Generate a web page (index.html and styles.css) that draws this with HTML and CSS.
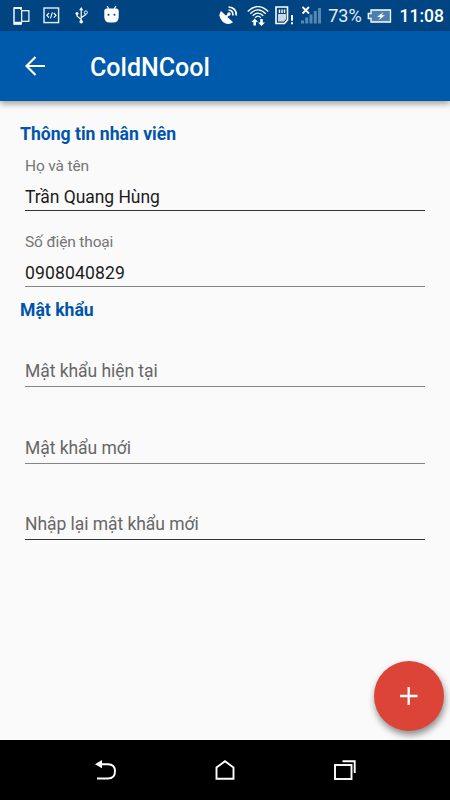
FILE: index.html
```html
<!DOCTYPE html>
<html lang="vi">
<head>
<meta charset="utf-8">
<title>ColdNCool</title>
<link rel="stylesheet" href="styles.css">
</head>
<body>
<div id="screen">
	<div class="statusbar">
		<div class="notifications">
			<svg width="17" height="18" viewBox="0 0 17 18">
				<path d="M8 3V1H1v16h7v-2" fill="none" stroke="#fff" stroke-width="1.4"/>
				<path d="M1 1h8M1 16.5h8M1 15.5h8" stroke="#fff" stroke-width="1.4"/>
				<rect x="8.7" y="3.7" width="7.2" height="10.6" fill="none" stroke="#fff" stroke-width="1.2"/>
			</svg>
			<svg width="17" height="17" viewBox="0 0 17 17">
				<rect x="1" y="1" width="14.6" height="14.6" fill="none" stroke="#e8f0f8" stroke-width="1.4"/>
				<path d="M6 6L3.8 8.3L6 10.6M10.8 6L13 8.3L10.8 10.6M9.4 5.3L7.4 11.3" fill="none" stroke="#fff" stroke-width="1.1"/>
			</svg>
			<svg width="13" height="17" viewBox="0 0 13 17">
				<path d="M6.2 2v13M2 6.5v2.5l4.2 3.5M10.5 6v1.8L6.2 10.8" fill="none" stroke="#fff" stroke-width="1.2"/>
				<path d="M6.2 0L8.3 3.2H4.1Z" fill="#fff"/>
				<circle cx="6.2" cy="14.8" r="1.8" fill="#fff"/>
				<circle cx="2" cy="6.4" r="1.5" fill="#fff"/>
				<circle cx="10.8" cy="5.5" r="1.6" fill="#004481" stroke="#fff"/>
			</svg>
			<svg class="robot" width="15" height="18" viewBox="0 0 15 18">
				<path d="M3.2 0L4.6 3M11.8 0L10.4 3" stroke="#fff" stroke-width="1.2"/>
				<path d="M0.3 5Q0.3 2.5 3 2.5H12Q14.7 2.5 14.7 5V11Q14.7 16.5 9 16.5H6Q0.3 16.5 0.3 11Z" fill="#fff"/>
				<circle cx="4.5" cy="8.8" r="1" fill="#004481"/>
				<circle cx="10.5" cy="8.8" r="1" fill="#004481"/>
			</svg>
		</div>
		<div class="system">
			<svg class="sat" width="19" height="19" viewBox="0 0 19 19">
				<path d="M2 5L14 16.3Q10 19.5 5 16.8L3.5 15.5Q-1.8 10 2 5Z" fill="#fff"/>
				<path d="M7 11L10 8" stroke="#fff" stroke-width="1.8"/>
				<circle cx="10" cy="8" r="1.7" fill="#fff"/>
				<path d="M9.5 4Q14 4 14 9.5M9.5 1Q17.5 1.5 17.3 9.5" fill="none" stroke="#fff" stroke-width="1.7"/>
			</svg>
			<svg class="wifi" width="22" height="21" viewBox="0 0 22 21">
				<path d="M0.7 5.5Q11 -4.3 21.3 5.500M3.200 7.700Q11 0 18.800 7.700M5.700 9.800Q11 4.300 16.300 9.800M8.200 11.700Q11 8.600 13.800 11.700" fill="none" stroke="#fff" stroke-width="1.3"/>
				<path d="M7.7 12.5L11 16H9V19.5H6.4V16H4.4ZM14.5 20L11 16.5H13.2V13H15.8V16.5H18Z" fill="#fff"/>
			</svg>
			<svg class="sim" width="20" height="19" viewBox="0 0 20 19">
				<path d="M1 1H12.5V14L9.5 17.5H1Z" fill="none" stroke="#fff" stroke-width="1.6"/>
				<path d="M4.5 3.5V7M7 3.5V7M9.5 3.5V7" stroke="#fff" stroke-width="1.4"/>
				<path d="M3 8H11V13L9 15.5H3Z" fill="#c9d8e6"/>
				<path d="M17 9V14.8M17 16.3V18.3" stroke="#fff" stroke-width="2"/>
			</svg>
			<svg class="signal" width="21" height="18" viewBox="0 0 21 18">
				<path d="M1.5 17.5V14.5M5.7 17.5V11.5M10 17.5V8.5M14.3 17.5V5M18.5 17.5V2" stroke="#5688b4" stroke-width="3"/>
				<path d="M1.5 1L8 7.5M8 1L1.5 7.5" stroke="#fff" stroke-width="1.8"/>
			</svg>
			<span class="percent">73%</span>
			<svg class="battery" width="25" height="14" viewBox="0 0 25 14">
				<path d="M4 1H23.5V13H4V9.5H1.3V4.5H4Z" fill="#4d80b0" stroke="#fff" stroke-width="1.3"/>
				<path d="M16.5 3L10 8H13.5L11.5 11.2L18 6.3H14.5Z" fill="#fff"/>
			</svg>
			<span class="clock">11:08</span>
		</div>
	</div>

	<div class="appbar">
		<svg width="20" height="20" viewBox="0 0 20 20">
			<path d="M20 10H1.8M10.5 1L1.5 10L10.5 19" fill="none" stroke="#fff" stroke-width="2.2"/>
		</svg>
		<span class="title">ColdNCool</span>
	</div>

	<div class="content">
		<div class="heading">Thông tin nhân viên</div>
		<div class="field">
			<div class="label">Họ và tên</div>
			<div class="value">Trần Quang Hùng</div>
		</div>
		<div class="field second">
			<div class="label">Số điện thoại</div>
			<div class="value soft phone">0908040829</div>
		</div>
		<div class="heading password">Mật khẩu</div>
		<div class="field empty">
			<div class="value hint soft">Mật khẩu hiện tại</div>
		</div>
		<div class="field empty">
			<div class="value hint soft">Mật khẩu mới</div>
		</div>
		<div class="field empty">
			<div class="value hint">Nhập lại mật khẩu mới</div>
		</div>
		<div class="fab">
			<svg width="18" height="18" viewBox="0 0 18 18">
				<path d="M8.7 0V18M0 9H17.5" stroke="#fff" stroke-width="2.3"/>
			</svg>
		</div>
	</div>

	<div class="navbar">
		<svg width="22" height="20" viewBox="0 0 22 20">
			<path d="M4 4.2H13Q20 4.2 20 11.3Q20 18.5 13 18.5H2" fill="none" stroke="#fff" stroke-width="1.9"/>
			<path d="M0 4.2L7 0V8.3Z" fill="#fff"/>
		</svg>
		<svg class="home" width="20" height="20" viewBox="0 0 20 20">
			<path d="M1.5 18.8V7.5L10 1.3L18.5 7.5V18.8Z" fill="none" stroke="#fff" stroke-width="1.9"/>
		</svg>
		<svg width="22" height="20" viewBox="0 0 22 20">
			<rect x="1" y="5" width="16.5" height="14" fill="none" stroke="#fff" stroke-width="1.9"/>
			<path d="M8.5 1.2H20.7V13" fill="none" stroke="#fff" stroke-width="1.9"/>
		</svg>
	</div>
</div>
</body>
</html>
```
FILE: styles.css
```css
body {
	margin:0;
	font-family:Roboto, "Noto Sans", sans-serif;
}
svg {
	display:block;
	flex:none;
}
#screen {
	display:flex;
	flex-direction:column;
	width:450px;
	height:800px;
	overflow:hidden;
	background:#fafafa;
}
.statusbar {
	display:flex;
	justify-content:space-between;
	box-sizing:border-box;
	height:31px;
	padding:0 6px 0 13px;
	background:#004481;
	color:#fff;
}
.notifications {
	display:flex;
	align-items:flex-start;
	gap:13px;
	padding-top:7px;
}
.notifications svg:nth-child(3) {
	margin-left:2px;
}
.notifications .robot {
	margin:-1px 0 0 3px;
}
.system {
	display:flex;
	align-items:flex-start;
}
.sat {
	margin:6px 9px 0 0;
}
.wifi {
	margin:6px 6px 0 0;
}
.sim {
	margin:6px 6px 0 0;
}
.signal {
	margin:6px 6px 0 0;
}
.percent {
	font-size:18px;
	line-height:32px;
	color:#e6eef5;
}
.battery {
	margin:9px 8px 0 5px;
}
.clock {
	font-size:17.5px;
	font-weight:500;
	line-height:32px;
}
.appbar {
	display:flex;
	align-items:center;
	height:70px;
	padding-left:25px;
	background:#005aab;
	box-shadow:0 3px 6px rgba(0,0,0,0.35);
	color:#fff;
}
.title {
	margin:2px 0 0 45px;
	font-size:25px;
	font-weight:500;
}
.content {
	position:relative;
	flex:1;
	padding:22px 25px 0;
}
.heading {
	margin-left:-5px;
	font-size:17.6px;
	font-weight:700;
	line-height:22px;
	color:#0055ab;
}
.password {
	margin-top:12px;
}
.field {
	height:66px;
}
.label {
	padding-top:11px;
	font-size:15.5px;
	letter-spacing:-0.15px;
	line-height:20px;
	color:#757575;
}
.value {
	box-sizing:border-box;
	height:35px;
	padding-top:10px;
	border-bottom:1px solid #333;
	font-size:17.5px;
	letter-spacing:-0.05px;
	line-height:22px;
	color:#1c1c1c;
}
.second {
	margin-top:10px;
}
.soft {
	border-bottom-color:#858585;
}
.phone {
	font-size:17.6px;
	letter-spacing:0.1px;
}
.empty {
	box-sizing:border-box;
	height:76.5px;
	padding-top:31px;
}
.hint {
	padding-top:8px;
	color:#666;
}
.fab {
	position:absolute;
	right:6px;
	bottom:9px;
	display:flex;
	align-items:center;
	justify-content:center;
	width:70px;
	height:70px;
	border-radius:50%;
	background:#db4437;
	box-shadow:1px 4px 7px rgba(0,0,0,0.45);
}
.navbar {
	display:flex;
	justify-content:space-between;
	align-items:center;
	box-sizing:border-box;
	height:60px;
	padding:0 94px 0 95px;
	background:#000;
}
.home {
	margin-right:2px;
}
```
